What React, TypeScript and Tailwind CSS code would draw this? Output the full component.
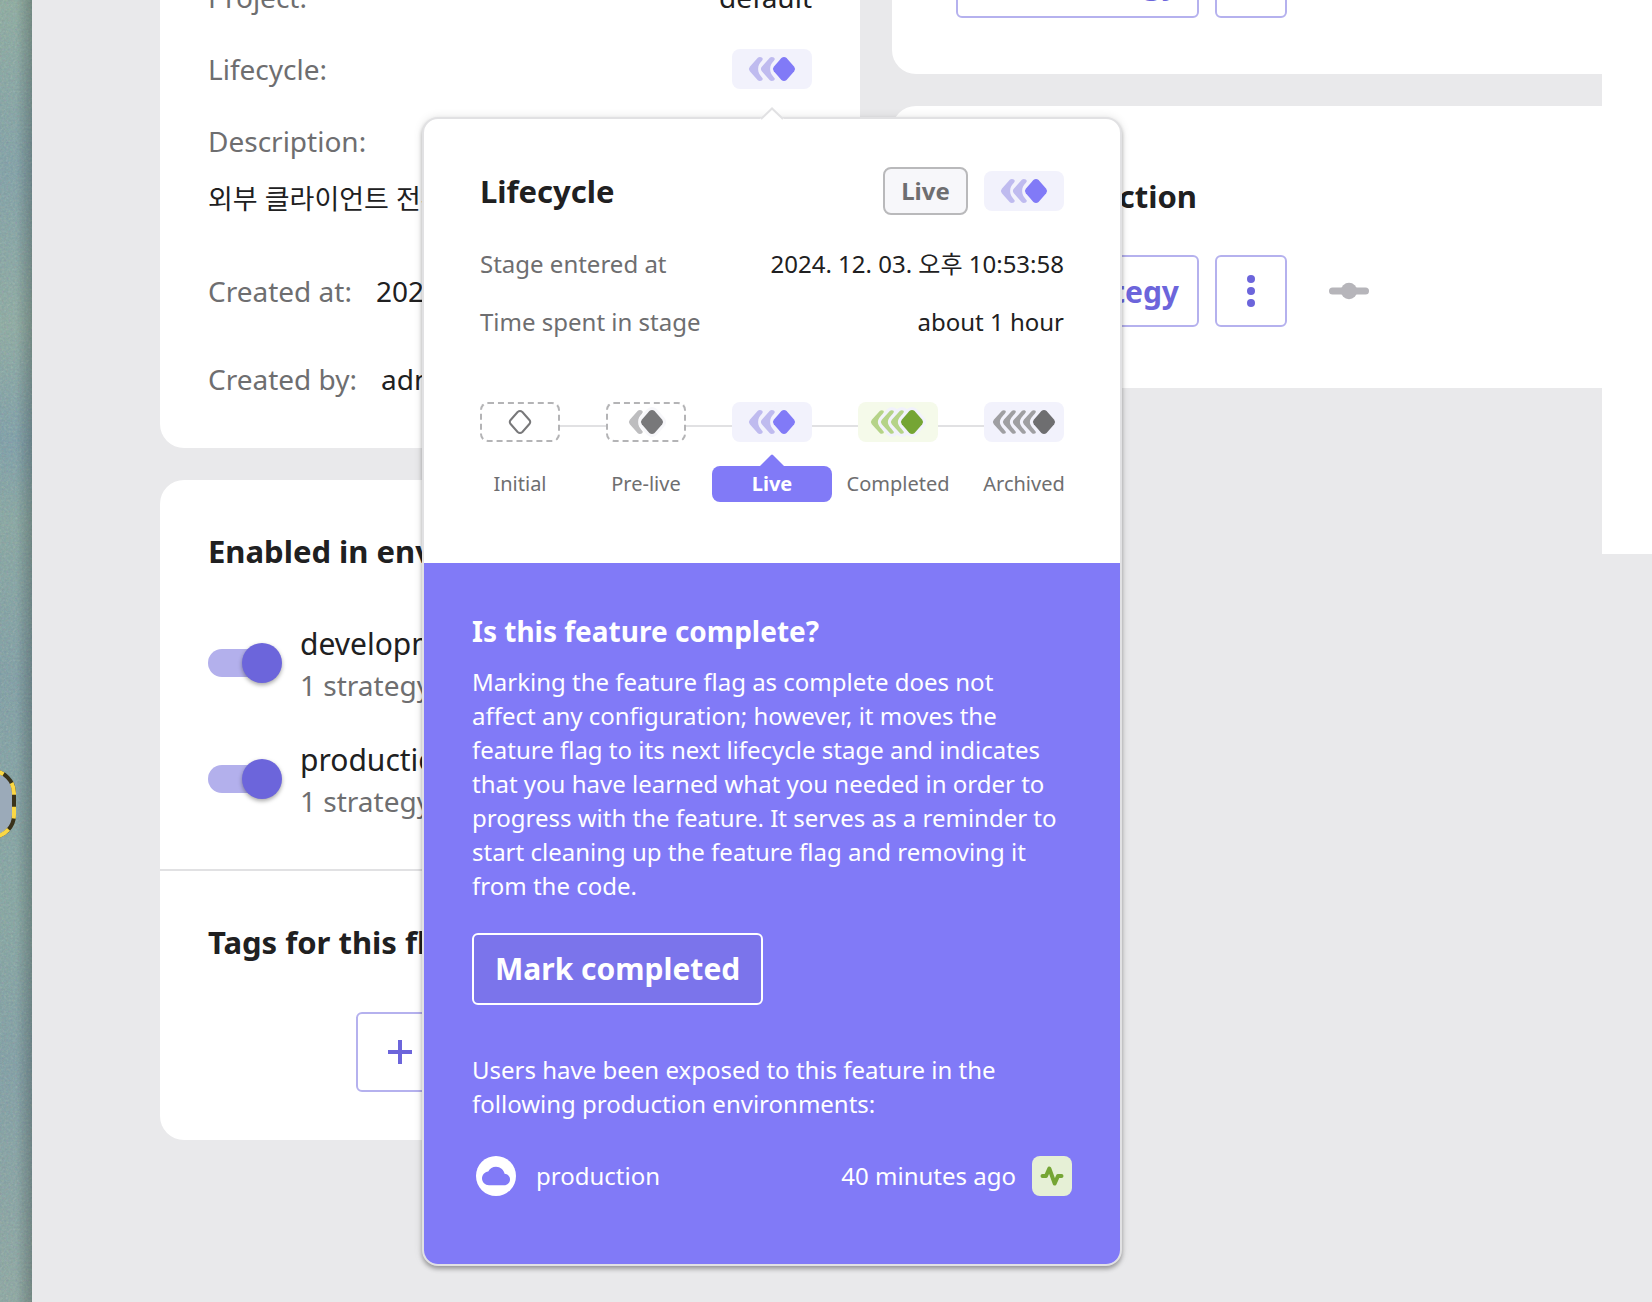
import type { ReactNode } from 'react';

const DIAMOND =
  'M-2.6 -10.9Q0 -13 2.6 -10.9L10.2 -2.2Q12 0 10.2 2.2L2.6 10.9Q0 13 -2.6 10.9L-10.2 2.2Q-12 0 -10.2 -2.2Z';
const CHEVRON_WIDE =
  'M-2.2 -11.2C-0.5 -12.8 3.6 -11.6 2.6 -9.2C1.6 -7.6 0 -6.2 -0.9 -4.400C-2.200 -2 -2.200 2 -0.9 4.400C0 6.200 1.600 7.600 2.600 9.200C3.600 11.600 -0.5 12.800 -2.200 11.200L-10.200 2.200Q-12 0 -10.200 -2.200Z';
const CHEVRON_NARROW =
  'M-2 -11.2C-0.5 -12.6 2.8 -11.6 1.600 -9.600C0.4 -7.800 -1.600 -5.800 -2.800 -4C-4.600 -1.400 -4.600 1.400 -2.800 4C-1.600 5.800 0.4 7.800 1.600 9.600C2.800 11.600 -0.5 12.600 -2 11.200L-10.200 2.200Q-12 0 -10.200 -2.200Z';

type Stage = 'initial' | 'preLive' | 'live' | 'completed' | 'archived';

const STAGES: Record<
  Stage,
  { box: string; trail: number[]; head: number; chevron: string; light: string; dark: string; halo: string }
> = {
  initial: { box: 'border-2 border-dashed border-[#b4b4b6]', trail: [], head: 40, chevron: '', light: 'none', dark: 'none', halo: 'none' },
  preLive: { box: 'border-2 border-dashed border-[#b4b4b6]', trail: [34], head: 46, chevron: CHEVRON_WIDE, light: '#bdbdbf', dark: '#78787a', halo: '#f7f7fa' },
  live: { box: 'bg-[#f2f2fc]', trail: [28, 40], head: 52, chevron: CHEVRON_WIDE, light: '#bfbbef', dark: '#817af7', halo: '#f2f2fc' },
  completed: { box: 'bg-[#f5faea]', trail: [24, 34, 44], head: 54, chevron: CHEVRON_NARROW, light: '#b5d388', dark: '#75a534', halo: '#f2f2fc' },
  archived: { box: 'bg-[#f2f2fc]', trail: [20, 30, 40, 50], head: 60, chevron: CHEVRON_NARROW, light: '#9f9fa2', dark: '#6e6e70', halo: '#f2f2fc' },
};

function StageIcon({ stage }: { stage: Stage }) {
  const s = STAGES[stage];
  return (
    <span className={`flex h-10 w-20 shrink-0 items-center justify-center rounded-lg ${s.box}`}>
      <svg width="80" height="40" viewBox="0 0 80 40" className="shrink-0" aria-hidden="true">
        {stage === 'initial' ? (
          <path d={DIAMOND} transform="translate(40 20) scale(.92)" fill="#fff" stroke="#78787a" strokeWidth="2.2" />
        ) : (
          <>
            {[...s.trail.slice(1), s.head].map((x) => (
              <path key={x} d={DIAMOND} transform={`translate(${x} 20)`} fill={s.halo} stroke={s.halo} strokeWidth="6" />
            ))}
            {s.trail.map((x) => (
              <path key={x} d={s.chevron} transform={`translate(${x} 20)`} fill={s.light} />
            ))}
            <path d={DIAMOND} transform={`translate(${s.head} 20)`} fill={s.dark} />
          </>
        )}
      </svg>
    </span>
  );
}

function MetaRow({ label, children }: { label: string; children?: ReactNode }) {
  return (
    <div className="flex h-[72px] items-center justify-between">
      <dt className="text-[#6e6e70]">{label}</dt>
      <dd>{children}</dd>
    </div>
  );
}

function CreatedRow({ label, children }: { label: string; children: ReactNode }) {
  return (
    <div className="flex h-[88px] items-center gap-6">
      <dt className="text-[#6e6e70]">{label}</dt>
      <dd>{children}</dd>
    </div>
  );
}

function EnvironmentToggle({ name }: { name: string }) {
  return (
    <label className="flex items-start gap-[18px]">
      <span className="relative flex h-20 w-[74px] shrink-0 items-center">
        <input
          type="checkbox"
          role="switch"
          defaultChecked
          className="peer h-7 w-[70px] appearance-none rounded-full bg-[#d5d5d8] checked:bg-[#b3b0ec]"
        />
        <span className="pointer-events-none absolute left-0 size-10 rounded-full bg-[#6c65db] shadow-[0_2px_4px_rgba(0,0,0,0.35)] peer-checked:left-auto peer-checked:right-0" />
      </span>
      <span className="flex flex-col">
        <span className="text-[30px] leading-[42px]">{name}</span>
        <span className="text-[28px] leading-[40px] text-[#6e6e70]">1 strategy</span>
      </span>
    </label>
  );
}

function StrategyActions() {
  return (
    <div className="flex items-center gap-4">
      <button className="h-[72px] w-[243px] shrink-0 whitespace-nowrap rounded-md border-2 border-[#b5b1ee] pr-[18px] text-right text-[30px] font-bold text-[#6c65db]">
        Add strategy
      </button>
      <button
        aria-label="More strategies"
        className="grid size-[72px] shrink-0 place-items-center rounded-md border-2 border-[#b5b1ee] text-[#6c65db]"
      >
        <svg width="40" height="40" viewBox="0 0 40 40" fill="currentColor" aria-hidden="true">
          <circle cx="20" cy="8" r="4" />
          <circle cx="20" cy="20" r="4" />
          <circle cx="20" cy="32" r="4" />
        </svg>
      </button>
      <svg width="40" height="20" viewBox="0 0 40 20" className="ml-[26px] shrink-0" fill="#b6b5ba" aria-hidden="true">
        <rect x="0" y="6.5" width="40" height="7" rx="3.5" />
        <circle cx="20" cy="10" r="8.2" />
      </svg>
    </div>
  );
}

function Wallpaper() {
  return (
    <div className="relative w-8 shrink-0 overflow-hidden bg-[linear-gradient(to_bottom,#8aaa9e_0%,#7d9fa5_13%,#8aa9a0_25%,#7a9da6_34%,#84a5a0_40%,#7c9da3_52%,#82a4a0_70%,#7d9da3_82%,#8aa6a0_100%)]">
      <svg className="absolute inset-0 h-full w-full opacity-30" aria-hidden="true">
        <filter id="grain">
          <feTurbulence type="fractalNoise" baseFrequency="0.45" numOctaves="3" />
          <feColorMatrix type="saturate" values="0.6" />
        </filter>
        <rect width="100%" height="100%" filter="url(#grain)" />
      </svg>
      <div className="absolute inset-y-0 right-0 w-4 bg-linear-to-r from-transparent to-black/20" />
      <svg className="absolute left-0 top-[766px]" width="20" height="76" viewBox="0 0 20 76" aria-hidden="true">
        <rect x="-50" y="5" width="64" height="66" rx="22" fill="#9baab9" stroke="#39321a" strokeWidth="4" />
        <path d="M-8 5A22 22 0 0 1 14 27V49A22 22 0 0 1 -8 71" fill="none" stroke="#fbd845" strokeWidth="4" strokeDasharray="12 12" strokeDashoffset="0" />
      </svg>
    </div>
  );
}

function Connector() {
  return <li aria-hidden="true" className="mt-[23px] h-0.5 flex-1 bg-[#e1e1e3]" />;
}

function StageStep({ stage, label, current }: { stage: Stage; label: string; current?: boolean }) {
  return (
    <li className="flex w-20 flex-col items-center">
      <StageIcon stage={stage} />
      {current ? (
        <span className="relative mt-6 w-[120px] rounded-lg bg-[#817af7] text-center text-[20px] font-bold leading-9 text-white">
          <svg className="absolute -top-3 left-12" width="24" height="12" viewBox="0 0 24 12" fill="#817af7" aria-hidden="true">
            <path d="M0 12L11 1Q12 0 13 1L24 12Z" />
          </svg>
          {label}
        </span>
      ) : (
        <span className="mt-6 whitespace-nowrap text-[20px] leading-9 text-[#6e6e70]">{label}</span>
      )}
    </li>
  );
}

function LifecyclePopover() {
  return (
    <section
      aria-label="Lifecycle"
      className="absolute left-[422px] top-[117px] w-[700px] rounded-2xl border-2 border-[#e1e1e3] bg-white shadow-[0_3px_4px_rgba(0,0,0,0.3),0_0_10px_rgba(0,0,0,0.1)]"
    >
      <svg className="absolute -top-3 left-[336px]" width="24" height="14" viewBox="0 0 24 14" aria-hidden="true">
        <path d="M0 12L12 1L24 12V14H0Z" fill="#fff" />
        <path d="M1 12L12 1.5L23 12" fill="none" stroke="#e1e1e3" strokeWidth="2" />
      </svg>
      <div className="px-14 pb-[61px] pt-12 text-[24px] leading-[34px]">
        <div className="flex h-12 items-center justify-between">
          <h2 className="text-[31px] font-bold leading-[40px]">Lifecycle</h2>
          <div className="flex items-center gap-4">
            <span className="grid h-12 w-[85px] place-items-center rounded-lg border-2 border-[#b9b9bb] bg-[#f7f7fa] font-bold text-[#6e6e70]">
              Live
            </span>
            <StageIcon stage="live" />
          </div>
        </div>
        <dl className="mt-8 flex flex-col gap-6">
          <div className="flex justify-between">
            <dt className="text-[#6e6e70]">Stage entered at</dt>
            <dd>2024. 12. 03. 오후 10:53:58</dd>
          </div>
          <div className="flex justify-between">
            <dt className="text-[#6e6e70]">Time spent in stage</dt>
            <dd>about 1 hour</dd>
          </div>
        </dl>
        <ol className="mt-[63px] flex items-start">
          <StageStep stage="initial" label="Initial" />
          <Connector />
          <StageStep stage="preLive" label="Pre-live" />
          <Connector />
          <StageStep stage="live" label="Live" current />
          <Connector />
          <StageStep stage="completed" label="Completed" />
          <Connector />
          <StageStep stage="archived" label="Archived" />
        </ol>
      </div>
      <div className="rounded-b-[14px] bg-[#817af7] px-12 pb-[68px] pt-12 text-[24px] leading-[34px] text-white">
        <h3 className="text-[28px] font-bold leading-[40px]">Is this feature complete?</h3>
        <p className="mt-3.5">
          Marking the feature flag as complete does not <br />
          affect any configuration; however, it moves the <br />
          feature flag to its next lifecycle stage and indicates <br />
          that you have learned what you needed in order to <br />
          progress with the feature. It serves as a reminder to <br />
          start cleaning up the feature flag and removing it <br />
          from the code.
        </p>
        <button className="mt-[30px] block h-[72px] rounded-md border-2 border-white bg-[#7b74eb] px-[21px] text-[30px] font-bold">
          Mark completed
        </button>
        <p className="mt-12">
          Users have been exposed to this feature in the following production environments:
        </p>
        <div className="mt-[35px] flex items-center pl-1">
          <span className="grid size-10 place-items-center rounded-full bg-white">
            <svg width="28" height="28" viewBox="0 0 24 24" fill="#817af7" aria-hidden="true">
              <path d="M19.35 10.04C18.67 6.59 15.64 4 12 4 9.11 4 6.6 5.64 5.35 8.04 2.34 8.36 0 10.91 0 14c0 3.31 2.69 6 6 6h13c2.76 0 5-2.24 5-5 0-2.64-2.05-4.78-4.65-4.96z" />
            </svg>
          </span>
          <span className="ml-5">production</span>
          <span className="ml-auto">40 minutes ago</span>
          <span className="ml-4 grid size-10 place-items-center rounded-lg bg-[#e6f0d6]">
            <svg width="24" height="24" viewBox="0 0 24 24" fill="none" stroke="#75a534" strokeWidth="4" strokeLinecap="round" strokeLinejoin="round" aria-hidden="true">
              <path d="M2.500 12H6L9.300 4.500L14.700 19.500L18 12H21.500" />
            </svg>
          </span>
        </div>
      </div>
    </section>
  );
}

export default function App() {
  return (
    <div className="flex h-screen overflow-hidden bg-[#e9e9eb] font-['Noto_Sans','Noto_Sans_CJK_KR',sans-serif] text-[#202021]">
      <Wallpaper />
      <main className="flex min-w-0 flex-1 items-start pl-32">
        <div className="-mt-[39px] flex w-[700px] shrink-0 flex-col gap-8">
          <section className="rounded-3xl bg-white px-12 pb-[25px] text-[28px]">
            <dl>
              <MetaRow label="Project:">default</MetaRow>
              <MetaRow label="Lifecycle:">
                <StageIcon stage="live" />
              </MetaRow>
              <MetaRow label="Description:" />
              <dd className="mb-[26px] text-[27px] leading-[44px]">외부 클라이언트 전환</dd>
              <CreatedRow label="Created at:">2024. 12. 03.</CreatedRow>
              <CreatedRow label="Created by:">admin</CreatedRow>
            </dl>
          </section>
          <section className="rounded-3xl bg-white">
            <div className="border-b-2 border-[#e1e1e3] px-12 pb-12 pt-[51px]">
              <h2 className="text-[31px] font-bold leading-[40px]">Enabled in environments</h2>
              <div className="mt-[52px] flex flex-col gap-[34px]">
                <EnvironmentToggle name="development" />
                <EnvironmentToggle name="production" />
              </div>
            </div>
            <div className="flex flex-col px-12 pb-12 pt-[51px]">
              <h2 className="text-[31px] font-bold leading-[40px]">Tags for this flag</h2>
              <button
                aria-label="Add new tag"
                className="mt-[50px] flex h-20 w-[308px] items-center self-center rounded-md border-2 border-[#b5b1ee] px-[30px] text-[#6c65db]"
              >
                <svg width="24" height="24" viewBox="0 0 24 24" stroke="currentColor" strokeWidth="4" aria-hidden="true">
                  <path d="M12 0V24M0 12H24" />
                </svg>
              </button>
            </div>
          </section>
        </div>
        <div className="-mt-[54px] ml-8 flex min-w-0 flex-1 flex-col gap-8">
          <section className="rounded-l-3xl bg-white pb-14 pl-16">
            <StrategyActions />
          </section>
          <section className="rounded-l-3xl bg-white pb-[61px] pl-16 pt-[70px]">
            <h2 className="mb-[39px] w-[241px] text-right text-[31px] font-bold leading-[40px]">production</h2>
            <StrategyActions />
          </section>
        </div>
        <div className="h-[554px] w-[50px] shrink-0 bg-white" />
      </main>
      <LifecyclePopover />
    </div>
  );
}
